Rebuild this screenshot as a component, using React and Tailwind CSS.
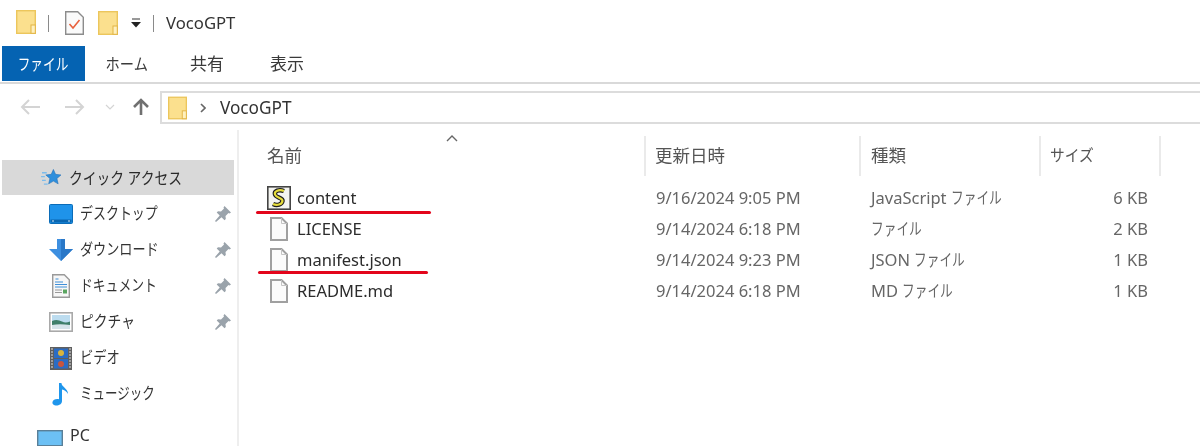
const font = { fontFamily: '"Noto Sans","Noto Sans CJK JP",sans-serif' };

function Folder({ className }) {
  return (
    <svg viewBox="0 0 20 24" className={className}>
      <rect x="0.7" y="0.7" width="18.6" height="22.6" fill="#fbe08e" stroke="#ecc65c" strokeWidth="1.4" />
      <rect x="15" y="15" width="4.3" height="8.3" fill="#fff0bd" stroke="#e2b445" strokeWidth="1" />
    </svg>
  );
}

function Star() {
  return (
    <svg viewBox="0 0 22 20" className="w-[21px] h-[19px] mr-[7px]">
      <path d="M13 1.500l2.300 5.200 5.700.6-4.300 3.800 1.300 5.600-5-2.900-5 2.900 1.300-5.600L5 7.300l5.700-.6z" fill="#2f8fdc" stroke="#2372b8" strokeWidth=".6" />
      <path d="M1 5h5M0 9h4M1 13h4M3 17h4" stroke="#7cbcec" strokeWidth="1.400" />
    </svg>
  );
}

function Desktop() {
  return (
    <svg viewBox="0 0 24 20" className="w-6 h-5">
      <rect x=".5" y=".5" width="23" height="19" rx="1" fill="#1f93ea" stroke="#0b6cb8" />
      <rect x="1.500" y="15.500" width="21" height="3" fill="#0a66b0" />
      <rect x="3" y="16.500" width="2" height="1" fill="#cfe6f7" />
      <rect x="19" y="16.500" width="2" height="1" fill="#cfe6f7" />
    </svg>
  );
}

function Download() {
  return (
    <svg viewBox="0 0 24 24" className="w-6 h-6">
      <path d="M8 1h8v10h8L12 23 0 11h8z" fill="#3d8fe0" />
      <path d="M12 1h4v10h8L12 23z" fill="#2a78c8" />
    </svg>
  );
}

function DocIcon() {
  return (
    <svg viewBox="0 0 18 24" className="w-[18px] h-6">
      <path d="M.7.7h11.600l5 5v17.600H.7z" fill="#f7f7f7" stroke="#9a9a9a" strokeWidth="1.400" />
      <path d="M3.500 5h3M3 8h8M3 10.500h12M3 13h12" stroke="#3f8fd8" strokeWidth="1.200" />
      <path d="M3 16h7M3 18.500h7" stroke="#999" strokeWidth="1" />
      <rect x="11" y="15.500" width="4" height="4" fill="#5aa560" />
    </svg>
  );
}

function Picture() {
  return (
    <svg viewBox="0 0 24 20" className="w-6 h-5">
      <rect x=".8" y=".8" width="22.400" height="18.400" fill="#fff" stroke="#a9a9a9" strokeWidth="1.600" />
      <rect x="3" y="3" width="18" height="14" fill="#bcdcef" />
      <path d="M3 9c4-2 7-1 10 .5s5 1 8 0V14H3z" fill="#3f7f6a" />
      <path d="M3 13c5-1 11-1 18 0v4H3z" fill="#d6e4ea" />
    </svg>
  );
}

function Film() {
  return (
    <svg viewBox="0 0 22 23" className="w-[22px] h-[23px]">
      <rect width="22" height="23" fill="#5f5f5f" />
      <rect x="4" y="1.500" width="14" height="9.500" fill="#2b6cc4" />
      <rect x="4" y="12" width="14" height="9.500" fill="#2b6cc4" />
      <circle cx="11" cy="6" r="3" fill="#d9b43c" />
      <circle cx="11" cy="17" r="3" fill="#c9553c" />
      <path d="M1 2h2M1 5h2M1 8h2M1 11h2M1 14h2M1 17h2M1 20h2M19 2h2M19 5h2M19 8h2M19 11h2M19 14h2M19 17h2M19 20h2" stroke="#ddd" strokeWidth="1.200" />
    </svg>
  );
}

function Music() {
  return (
    <svg viewBox="0 0 18 24" className="w-[18px] h-6">
      <path d="M7 1h2.400c.4 4 6.600 5.500 6.600 11-1.500-2.500-3.500-4-6-4.500V19c0 3-3 4.500-5.500 4.500S0 22 .5 20s3-3.500 6.500-2.800z" fill="#1f96ec" />
    </svg>
  );
}

function Pin() {
  return (
    <svg viewBox="0 0 16 16" className="w-4 h-4">
      <path d="M9.500 0L16 6.500l-1.500 1-1-.5-3 3 .3 3-1.300 1.300-3-3L1 16l-1-1 4.700-5.500-3-3L3 5.200l3 .3 3-3-.5-1z" fill="#9aa3ab" />
    </svg>
  );
}

function Monitor() {
  return (
    <svg viewBox="0 0 26 16" className="w-[26px] h-4 mt-[4px]">
      <rect x=".7" y=".7" width="24.600" height="15" fill="#6cc0f4" stroke="#5a7f97" strokeWidth="1.400" />
    </svg>
  );
}

function PlainFile() {
  return (
    <svg viewBox="0 0 18 24" className="w-[18px] h-6">
      <path d="M1 1h10.500l5.500 5.500V23H1z" fill="#fbfbfb" stroke="#a0a0a0" strokeWidth="2" />
      <path d="M11.500 1v5.500H17" fill="none" stroke="#c4c4c4" />
    </svg>
  );
}

function ScriptFile() {
  return (
    <svg viewBox="0 0 24 24" className="w-6 h-6">
      <rect x=".8" y=".8" width="22.400" height="22.400" fill="#f4f4f0" stroke="#444" strokeWidth="1.600" />
      <path d="M17 5C12 3 7 5 8 8.500s8 3 7.500 6.500S10 20 6 18" fill="none" stroke="#1c1c1c" strokeWidth="4.500" />
      <path d="M17 5C12 3 7 5 8 8.500s8 3 7.500 6.500S10 20 6 18" fill="none" stroke="#e6dd3c" strokeWidth="2.200" />
    </svg>
  );
}

const nav = [
  ["デスクトップ", <Desktop />, true, "scale-x-[.81]"],
  ["ダウンロード", <Download />, true, "scale-x-[.82]"],
  ["ドキュメント", <DocIcon />, true, "scale-x-[.8]"],
  ["ピクチャ", <Picture />, true, "scale-x-[.86]"],
  ["ビデオ", <Film />, false, "scale-x-[.83]"],
  ["ミュージック", <Music />, false, "scale-x-[.78]"],
];

function FileKana() {
  return (
    <span className="inline-block w-[50px] whitespace-nowrap">
      <span className="inline-block origin-left scale-x-[.77]">ファイル</span>
    </span>
  );
}

const files = [
  ["content", <ScriptFile />, "9/16/2024 9:05 PM", "JavaScript ", "6 KB"],
  ["LICENSE", <PlainFile />, "9/14/2024 6:18 PM", "", "2 KB"],
  ["manifest.json", <PlainFile />, "9/14/2024 9:23 PM", "JSON ", "1 KB"],
  ["README.md", <PlainFile />, "9/14/2024 6:18 PM", "MD ", "1 KB"],
];

export default function App() {
  return (
    <div style={font} className="w-[1200px] h-[446px] overflow-hidden bg-white text-[16px] text-[#3a3a3a] flex flex-col blur-[0.5px]">
      {/* title bar */}
      <div className="h-[46px] flex items-center pl-4 shrink-0">
        <Folder className="w-5 h-6 -mt-[2px]" />
        <div className="w-px h-[17px] bg-[#8a8a8a] ml-3" />
        <svg viewBox="0 0 19 24" className="w-[19px] h-6 ml-4">
          <path d="M.7.7h12l5.600 5.600v17H.7z" fill="#fafafa" stroke="#8c8c8c" strokeWidth="1.400" />
          <path d="M4.500 13l3.500 4 6.500-8" fill="none" stroke="#e8603c" strokeWidth="1.600" />
        </svg>
        <Folder className="w-5 h-6 ml-[14px]" />
        <svg viewBox="0 0 10 10" className="w-[10px] h-[10px] ml-[13px]">
          <path d="M1 1h8" stroke="#333" strokeWidth="1" />
          <path d="M0 4h10L5 9.500z" fill="#222" />
        </svg>
        <div className="w-px h-[17px] bg-[#8a8a8a] ml-3" />
        <span className="ml-3 text-[#333] text-[16.7px]">VocoGPT</span>
      </div>
      {/* tabs */}
      <div className="h-[38px] shrink-0 border-b-2 border-[#d9d9d9] flex text-[#3a3a3a] pl-[2px]">
        <div className="w-[83px] h-[35px] bg-[#0563b2] text-white flex items-center justify-center">
          <span className="inline-block whitespace-nowrap scale-x-[.79]">ファイル</span>
        </div>
        <div className="w-[53px] ml-[15px] h-[35px] flex items-center justify-center">
          <span className="inline-block whitespace-nowrap scale-x-[.89]">ホーム</span>
        </div>
        <div className="w-[34px] ml-[37px] h-[35px] flex items-center justify-center text-[17px]">共有</div>
        <div className="w-[34px] ml-[46px] h-[35px] flex items-center justify-center text-[17px]">表示</div>
      </div>
      {/* address row */}
      <div className="h-[46px] shrink-0 flex items-center pl-[20px]">
        <svg viewBox="0 0 20 16" className="w-5 h-4">
          <path d="M9 1L2 8l7 7M2 8h18" fill="none" stroke="#d4d4d4" strokeWidth="2" />
        </svg>
        <svg viewBox="0 0 20 16" className="w-5 h-4 ml-[25px]">
          <path d="M11 1l7 7-7 7M18 8H0" fill="none" stroke="#d4d4d4" strokeWidth="2" />
        </svg>
        <svg viewBox="0 0 10 6" className="w-[10px] h-[6px] ml-[20px]">
          <path d="M1 1l4 4 4-4" fill="none" stroke="#d4d4d4" strokeWidth="1.200" />
        </svg>
        <svg viewBox="0 0 18 18" className="w-[18px] h-[18px] ml-[17px]">
          <path d="M9 17V2M2 9l7-7 7 7" fill="none" stroke="#707070" strokeWidth="2.600" />
        </svg>
        <div className="ml-[10px] flex-1 h-[33px] mt-[1px] border-2 border-r-0 border-[#dcdcdc] flex items-center pl-[6px]">
          <Folder className="w-[19px] h-6" />
          <svg viewBox="0 0 6 10" className="w-[6px] h-[10px] ml-[13px]">
            <path d="M1 1l4 4-4 4" fill="none" stroke="#666" strokeWidth="1.600" />
          </svg>
          <span className="ml-[14px] text-[17.2px] text-[#333]">VocoGPT</span>
        </div>
      </div>
      {/* body */}
      <div className="flex-1 flex min-h-0 relative">
        <aside className="w-[239px] shrink-0 border-r-2 border-[#eeeeee] pt-[30px] pl-[2px] pr-[3px]">
          <div className="h-[35px] mb-[1px] bg-[#d9d9d9] flex items-center pl-[39px] text-[#2a2a2a]">
            <Star />
            <span className="inline-block whitespace-nowrap origin-left scale-x-[.86]">クイック アクセス</span>
          </div>
          {nav.map(([label, icon, pinned, scale]) => (
            <div key={label} className="h-[36px] flex items-center pl-[47px] pr-[3px] text-[#333]">
              <div className="w-[24px] flex justify-center">{icon}</div>
              <div className="ml-[7px] flex-1 pb-[2px]">
                <span className={"inline-block whitespace-nowrap origin-left " + scale}>{label}</span>
              </div>
              {pinned && <Pin />}
            </div>
          ))}
          <div className="h-[18px] mt-[14px] flex pl-[35px] text-[#333] leading-[18px] text-[16px]">
            <Monitor />
            <span className="ml-[7px]">PC</span>
          </div>
        </aside>
        <main className="flex-1 relative">
          <div className="absolute left-[207px] top-[5px] text-[#666]">
            <svg viewBox="0 0 12 7" className="w-3 h-[7px]">
              <path d="M1 6l5-5 5 5" fill="none" stroke="#666" strokeWidth="1.400" />
            </svg>
          </div>
          <div className="h-[40px] mt-[6px] grid grid-cols-[407px_215px_180px_120px] text-[#555] text-[17.5px]">
            <div className="border-r-2 border-[#eaeaea] flex items-center pl-[28px] pb-[2px]">名前</div>
            <div className="border-r-2 border-[#eaeaea] flex items-center pl-[9px] pb-[2px]">更新日時</div>
            <div className="border-r-2 border-[#eaeaea] flex items-center pl-[10px] pb-[2px]">種類</div>
            <div className="border-r-2 border-[#eaeaea] flex items-center pl-[9px] pb-[2px] text-[16px]">
              <span className="inline-block whitespace-nowrap origin-left scale-x-[.92]">サイズ</span>
            </div>
          </div>
          <div className="mt-[6px]">
            {files.map(([name, icon, date, type, size]) => (
              <div key={name} className="h-[31px] grid grid-cols-[407px_215px_180px_107px] items-center text-[16.5px]">
                <div className="flex items-center pl-[28px] text-[#2c2c2c]">
                  <div className="w-[24px] flex justify-center">{icon}</div>
                  <span className="ml-[6px] pt-[2px]">{name}</span>
                </div>
                <div className="pl-[10px] pt-[2px] text-[#666]">{date}</div>
                <div className="pl-[10px] pt-[2px] text-[#666] whitespace-pre">{type}<FileKana /></div>
                <div className="text-right pt-[2px] text-[#666]">{size}</div>
              </div>
            ))}
          </div>
          <div className="absolute left-[17px] top-[81px] w-[175px] h-[3px] rounded-full bg-[#e3051b]" />
          <div className="absolute left-[19px] top-[141px] w-[170px] h-[3px] rounded-full bg-[#e3051b]" />
        </main>
      </div>
    </div>
  );
}
